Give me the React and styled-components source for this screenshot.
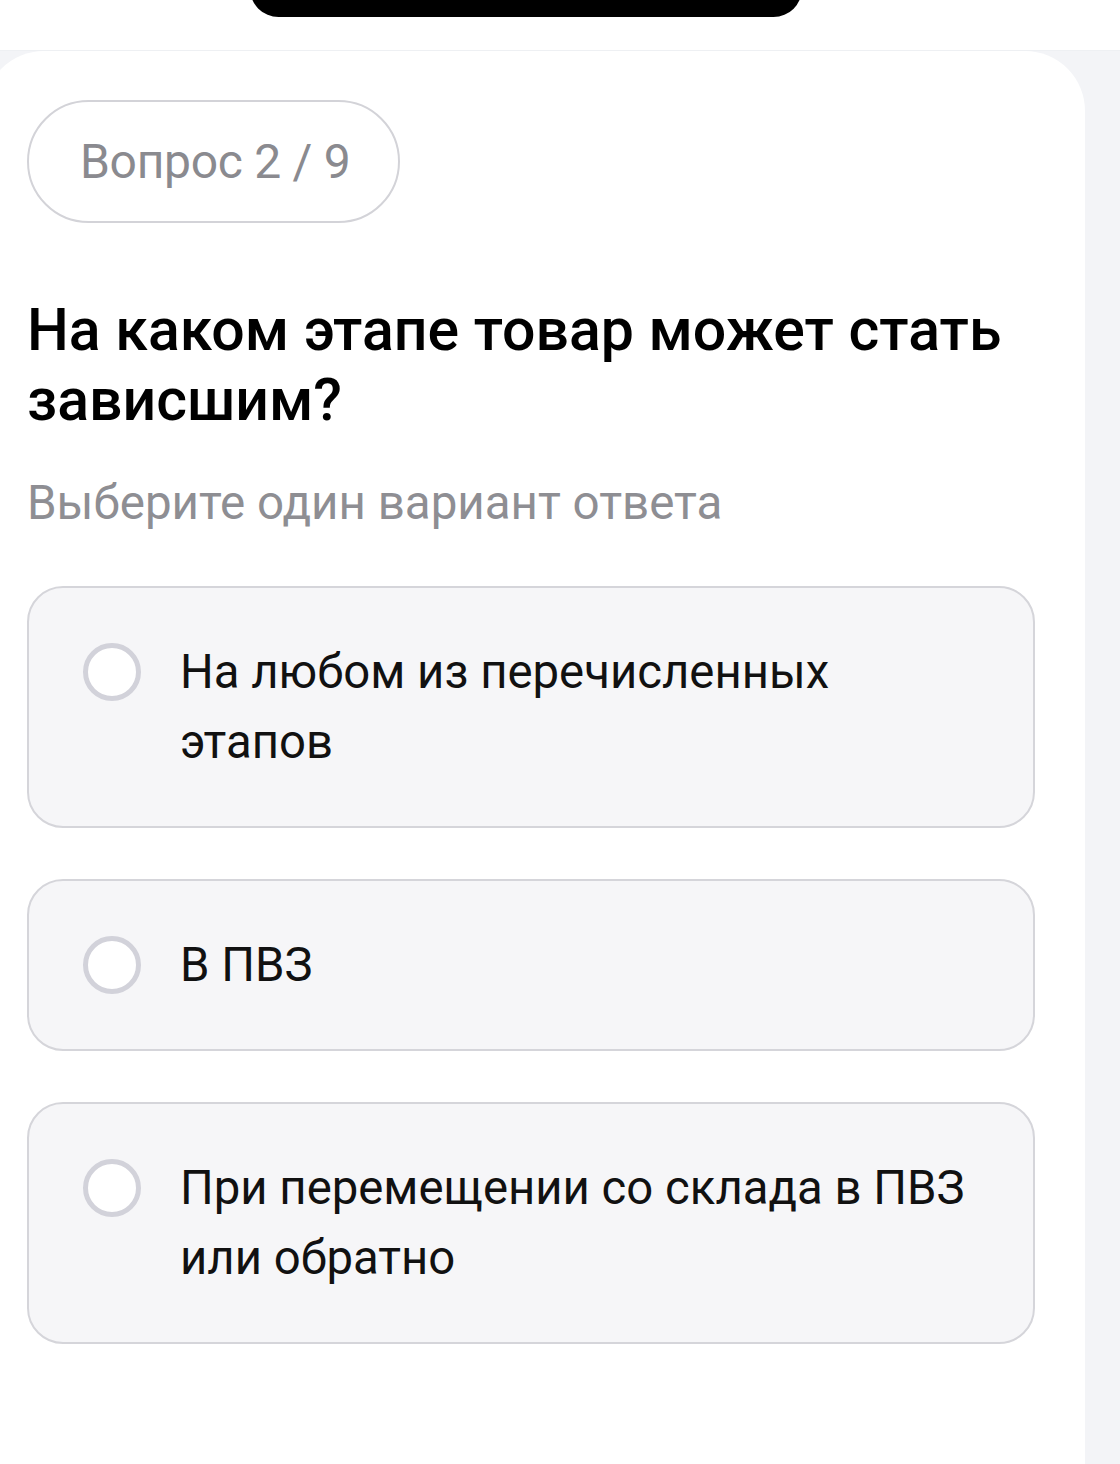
import React from "react";
import styled, { createGlobalStyle } from "styled-components";

const GlobalStyle = createGlobalStyle`
  html, body {
    margin: 0;
    padding: 0;
    background: #ffffff;
  }
  body {
    font-family: Roboto, "Noto Sans", "Liberation Sans", sans-serif;
    -webkit-font-smoothing: antialiased;
  }
  * { box-sizing: border-box; }
`;

const Screen = styled.div`
  width: 1120px;
  min-height: 1464px;
  display: flex;
  flex-direction: column;
  overflow: hidden;
`;

const StatusBar = styled.div`
  height: 51px;
  flex: none;
  background: #ffffff;
  border-bottom: 1px solid #eef0f3;
  overflow: hidden;
  display: flex;
`;

const Island = styled.div`
  width: 552px;
  height: 57px;
  margin-top: -40px;
  margin-left: 250px;
  background: #000000;
  border-radius: 40px;
`;

const Backdrop = styled.div`
  flex: 1;
  display: flex;
  background: #f3f4f7;
  padding-right: 35px;
`;

const Sheet = styled.main`
  flex: 1;
  margin-left: -16px;
  background: #ffffff;
  border-radius: 60px 60px 0 0;
  padding: 49px 50px 0 43px;
  display: flex;
  flex-direction: column;
  align-items: flex-start;
`;

const Counter = styled.div`
  display: inline-flex;
  align-items: center;
  height: 123px;
  padding: 0 48px 0 51px;
  border: 2px solid #d3d3d8;
  border-radius: 999px;
  color: #8a8a8f;
  font-size: 48px;
  font-weight: 400;
  letter-spacing: -0.3px;
`;

const Question = styled.h1`
  margin: 72px 0 0;
  font-size: 59px;
  line-height: 70px;
  font-weight: 500;
  color: #000000;
  letter-spacing: 0;
`;

const Hint = styled.p`
  margin: 40px 0 0;
  font-size: 47.5px;
  line-height: 56px;
  color: #8e8e93;
`;

const Options = styled.div`
  align-self: stretch;
  margin-top: 55px;
  display: flex;
  flex-direction: column;
  gap: 51px;
`;

const Option = styled.label`
  display: flex;
  align-items: flex-start;
  gap: 39px;
  padding: 49px 50px 49px 54px;
  background: #f6f6f8;
  border: 2px solid #d5d5da;
  border-radius: 36px;
  cursor: pointer;
`;

const Radio = styled.span`
  flex: none;
  width: 58px;
  height: 58px;
  margin-top: 6px;
  border-radius: 50%;
  background: #ffffff;
  border: 5px solid #d2d2da;
`;

const OptionText = styled.span`
  font-size: 47.3px;
  line-height: 70px;
  color: #111111;
`;

const answers = [
  "На любом из перечисленных этапов",
  "В ПВЗ",
  "При перемещении со склада в ПВЗ или обратно",
];

export default function App() {
  return (
    <>
      <GlobalStyle />
      <Screen>
        <StatusBar>
          <Island />
        </StatusBar>
        <Backdrop>
          <Sheet>
            <Counter>Вопрос 2 / 9</Counter>
            <Question>
              На каком этапе товар может стать
              <br />
              зависшим?
            </Question>
            <Hint>Выберите один вариант ответа</Hint>
            <Options>
              {answers.map((a) => (
                <Option key={a}>
                  <Radio />
                  <OptionText>{a}</OptionText>
                </Option>
              ))}
            </Options>
          </Sheet>
        </Backdrop>
      </Screen>
    </>
  );
}
